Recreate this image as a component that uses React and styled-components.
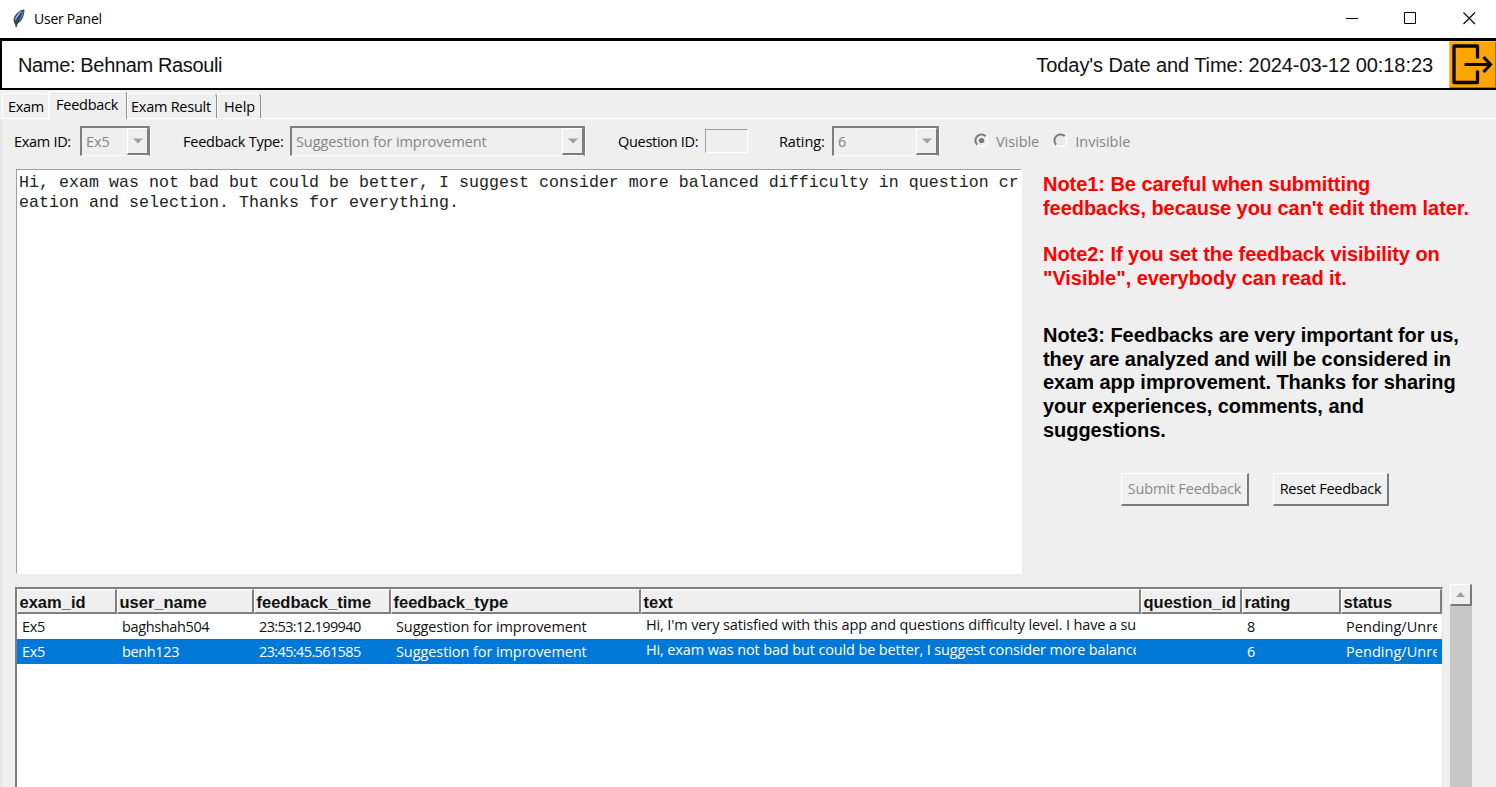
import React from "react";
import styled, { createGlobalStyle, css } from "styled-components";

const GlobalStyle = createGlobalStyle`
  * { box-sizing: border-box; }
  body { margin: 0; overflow: hidden; background: #f0f0f0; }
`;

const Window = styled.div`
  width: 1496px;
  height: 787px;
  overflow: hidden;
  display: flex;
  flex-direction: column;
  background: #efefef;
  font-family: "Open Sans", "Noto Sans", sans-serif;
  font-size: 14.5px;
  line-height: 20px;
  color: #000;
  white-space: nowrap;
`;

const TitleBar = styled.header`
  height: 38px;
  flex: none;
  display: flex;
  align-items: center;
  background: #fff;
  padding: 0 12px 1px;
`;
const Title = styled.h1`
  margin: 0 auto 0 9px;
  font-size: 14px;
  font-weight: 400;
  letter-spacing: -0.25px;
`;
const WindowButtons = styled.div`
  display: flex;
  gap: 46px;
  margin-right: 8px;
  svg { display: block; }
`;

const UserBar = styled.section`
  height: 52px;
  flex: none;
  display: flex;
  align-items: center;
  background: #fff;
  border: 2px solid #000;
  border-top-width: 3px;
  border-right-width: 0;
  font-family: "Liberation Sans", Arial, sans-serif;
  font-size: 20px;
  color: #111;
  padding-left: 16px;
`;
const UserName = styled.div`
  margin-right: auto;
  letter-spacing: -0.35px;
`;
const Clock = styled.div`
  margin-right: 16px;
  letter-spacing: -0.07px;
`;
const ExitButton = styled.button`
  width: 47px;
  height: 47px;
  padding: 0;
  border: 0;
  background: #ffa500;
  box-shadow: inset 1px 1px #ffc14d, inset -1px -1px #a86e00;
  svg { display: block; }
`;

const Tabs = styled.nav`
  height: 29px;
  flex: none;
  display: flex;
  align-items: flex-end;
  padding-left: 2px;
  border-bottom: 1px solid #fff;
`;
const Tab = styled.div`
  width: ${(p) => p.$w}px;
  height: 25px;
  padding: 3px 0 0 ${(p) => p.$pad}px;
  border: 1px solid #fff;
  border-right-color: ${(p) => (p.$covered ? "#efefef" : "#8f8f8f")};
  border-bottom: 0;
  border-radius: 3px 4px 0 0;
  background: #efefef;
  letter-spacing: ${(p) => p.$ls}px;
  ${(p) => p.$active && css`
    height: 28px;
    margin-bottom: -1px;
    border-left-width: 2px;
  `}
`;

const Pane = styled.main`
  flex: 1;
  display: flex;
  flex-direction: column;
  border-left: 2px solid #e6e6e6;
`;
const Controls = styled.div`
  height: 50px;
  flex: none;
  display: flex;
  align-items: flex-start;
  padding: 7px 0 0 12px;
`;
const Label = styled.label`
  width: ${(p) => p.$w}px;
  padding-top: 6px;
  letter-spacing: ${(p) => p.$ls}px;
`;
const Combo = styled.div`
  width: ${(p) => p.$w}px;
  height: 30px;
  margin-right: ${(p) => p.$gap}px;
  display: flex;
  justify-content: space-between;
  padding-left: 4px;
  color: #858585;
  letter-spacing: ${(p) => p.$ls}px;
  border: 2px solid #808080;
  border-bottom: 1px solid #fafafa;
  box-shadow: 1px 0 #fafafa;
  line-height: 28px;
`;
const ComboArrow = styled.div`
  width: 21px;
  height: 27px;
  display: grid;
  place-items: center;
  border: 1px solid #fff;
  border-right: 1px solid #7c7c7c;
  border-bottom: 2px solid #7c7c7c;
  svg { display: block; }
`;
const Entry = styled.div`
  width: 43px;
  height: 24px;
  margin: 3px 31px 0 0;
  border: 1px solid #a0a0a0;
  border-right-color: #fff;
  border-bottom-color: #fff;
`;
const Radio = styled.label`
  display: flex;
  gap: 7px;
  margin-right: 14px;
  padding-top: 6px;
  color: #858585;
  letter-spacing: ${(p) => p.$ls}px;
  svg { display: block; margin-top: 1px; }
`;

const Editor = styled.div`
  display: grid;
  grid-template-columns: 1006px 1fr;
  height: 415px;
  flex: none;
  padding-left: 14px;
`;
const TextArea = styled.div`
  height: 405px;
  background: #fff;
  border: 1px solid #a0a0a0;
  border-right-color: #fff;
  border-bottom-color: #fff;
  padding: 3px 0 0 2px;
  font-family: "Liberation Mono", "Courier New", monospace;
  font-size: 16.6px;
  letter-spacing: 0.04px;
  color: #222;
  white-space: pre;
`;
const Side = styled.aside`
  padding: 4px 0 0 21px;
`;
const Note = styled.p`
  margin: 0 0 ${(p) => p.$gap}px;
  font: 700 20px/23.9px "Liberation Sans", Arial, sans-serif;
  letter-spacing: -0.05px;
  color: ${(p) => (p.$warn ? "#ff0000" : "#000")};
`;
const Actions = styled.div`
  display: flex;
  gap: 24px;
  padding-left: 78px;
`;
const Button = styled.button`
  width: ${(p) => p.$w}px;
  height: 33px;
  padding: 0;
  font: inherit;
  letter-spacing: ${(p) => p.$ls}px;
  color: ${(p) => (p.disabled ? "#8a8a8a" : "#000")};
  background: #f0f0f0;
  border: 1px solid #fff;
  border-right: 2px solid #7a7a7a;
  border-bottom: 2px solid #7a7a7a;
`;

const TableArea = styled.div`
  flex: 1;
  display: flex;
  padding-left: 13px;
`;
const Table = styled.div`
  width: 1428px;
  margin: 3px 7px 0 0;
  background: #fff;
  border: 2px solid #808080;
  border-right: 1px solid #e3e3e3;
  border-bottom: 0;
`;
const Row = styled.div`
  display: grid;
  grid-template-columns: 100px 137px 137px 250px 500px 101px 99px 101px;
  height: 25px;
  color: ${(p) => (p.$selected ? "#fff" : "#111")};
  background: ${(p) => (p.$selected ? "#0078d7" : "#fff")};
`;
const Head = styled(Row)`
  background: #efefef;
  font: 700 16.5px/25px "Liberation Sans", Arial, sans-serif;
`;
const HeadCell = styled.div`
  height: 25px;
  padding-left: 1.5px;
  border: 1px solid #fff;
  border-right: 2px solid #808080;
  border-bottom: 2px solid #808080;
`;
const Cell = styled.div`
  overflow: hidden;
  height: 25px;
  margin: 0 5px 0 5px;
  line-height: ${(p) => (p.$raised ? 21 : 25)}px;
  letter-spacing: ${(p) => p.$ls || 0}px;
`;
const ScrollBar = styled.div`
  width: 22px;
  background: #c8c8c8;
`;
const ScrollArrow = styled.div`
  height: 22px;
  display: grid;
  place-items: center;
  background: #efefef;
  border: 1px solid #fff;
  border-right: 2px solid #7a7a7a;
  border-bottom: 2px solid #7a7a7a;
`;

const Feather = () => (
  <svg width="13" height="20" viewBox="0 0 13 20">
    <path d="M11.500.5C7 1.500 2 6 1.500 11.500l1.500 4 1.200 3.500.6-4C9.500 13 12 8 12.500 1z" fill="#3a3f47" />
    <path d="M9.500 2C6 4 3 8 2.800 12L9.500 3z" fill="#8db9e6" />
    <path d="M11.500 2C11.300 7 8.500 12 4.500 14L9.800 3z" fill="#4a86c8" />
    <path d="M9.500 4L4 18" stroke="#152133" strokeWidth=".8" />
  </svg>
);
const ExitIcon = () => (
  <svg width="47" height="47" viewBox="0 0 47 47" fill="none" stroke="#0a0700">
    <path d="M28.500 17.500V5H5v36.500h23.500V29.500" strokeWidth="3.300" strokeLinejoin="round" />
    <path d="M15.500 23.500H41.500M34.500 16l7 7.500-7 7.500" strokeWidth="3.200" />
  </svg>
);
const Down = () => (
  <svg width="10" height="6"><path d="M0 .5h10L5 5.500z" fill="#a0a0a0" /></svg>
);
const RadioMark = ({ on }) => (
  <svg width="15" height="15" viewBox="0 0 15 15" fill="none">
    <circle cx="7.500" cy="7.500" r="6" stroke="#fff" strokeWidth="1.500" fill="#e9e9e9" />
    <path d="M3.200 11.700A6 6 0 0 1 11.700 3.200" stroke="#7b7b7b" strokeWidth="2" />
    {on && <circle cx="7.500" cy="7.500" r="2.600" fill="#777" />}
  </svg>
);

const columns = ["exam_id", "user_name", "feedback_time", "feedback_type", "text", "question_id", "rating", "status"];
const rows = [
  ["Ex5", "baghshah504", "23:53:12.199940", "Suggestion for improvement", "Hi, I'm very satisfied with this app and questions difficulty level. I have a su", "", "8", "Pending/Unread"],
  ["Ex5", "benh123", "23:45:45.561585", "Suggestion for improvement", "Hi, exam was not bad but could be better, I suggest consider more balanced", "", "6", "Pending/Unread"],
];
const spacing = [-0.3, -0.37, -0.62, -0.08, -0.13, 0, 0, 0.04];

export default function App() {
  return (
    <Window>
      <GlobalStyle />
      <TitleBar>
        <Feather />
        <Title>User Panel</Title>
        <WindowButtons>
          <svg width="13" height="13"><path d="M1 6.500h12" stroke="#000" /></svg>
          <svg width="13" height="13"><path d="M.5.5h11v11H.5z" fill="none" stroke="#000" /></svg>
          <svg width="13" height="13"><path d="M.5.5l11.500 11.500m0-11.500l-11.500 11.500" stroke="#000" strokeWidth="1.100" /></svg>
        </WindowButtons>
      </TitleBar>
      <UserBar>
        <UserName>Name: Behnam Rasouli</UserName>
        <Clock>Today's Date and Time: 2024-03-12 00:18:23</Clock>
        <ExitButton aria-label="Exit"><ExitIcon /></ExitButton>
      </UserBar>
      <Tabs>
        <Tab $w={46} $pad={5} $ls={-0.3} $covered>Exam</Tab>
        <Tab $w={79} $pad={6} $ls={-0.25} $active>Feedback</Tab>
        <Tab $w={90} $pad={3} $ls={-0.25}>Exam Result</Tab>
        <Tab $w={44} $pad={6} $ls={-0.1}>Help</Tab>
      </Tabs>
      <Pane>
        <Controls>
          <Label $w={66} $ls={-0.3}>Exam ID:</Label>
          <Combo $w={70} $gap={33} $ls={-0.1}>Ex5<ComboArrow><Down /></ComboArrow></Combo>
          <Label $w={107} $ls={-0.25}>Feedback Type:</Label>
          <Combo $w={295} $gap={33} $ls={-0.08}>Suggestion for improvement<ComboArrow><Down /></ComboArrow></Combo>
          <Label $w={87} $ls={-0.3}>Question ID:</Label>
          <Entry />
          <Label $w={53} $ls={-0.1}>Rating:</Label>
          <Combo $w={107} $gap={35} $ls={0}>6<ComboArrow><Down /></ComboArrow></Combo>
          <Radio $ls={-0.05}><RadioMark on />Visible</Radio>
          <Radio $ls={0}><RadioMark />Invisible</Radio>
        </Controls>
        <Editor>
          <TextArea>{"Hi, exam was not bad but could be better, I suggest consider more balanced difficulty in question cr\neation and selection. Thanks for everything."}</TextArea>
          <Side>
            <Note $warn $gap={22}>Note1: Be careful when submitting<br />feedbacks, because you can't edit them later.</Note>
            <Note $warn $gap={33}>Note2: If you set the feedback visibility on<br />"Visible", everybody can read it.</Note>
            <Note $gap={30}>Note3: Feedbacks are very important for us,<br />they are analyzed and will be considered in<br />exam app improvement. Thanks for sharing<br />your experiences, comments, and<br />suggestions.</Note>
            <Actions>
              <Button $w={128} $ls={-0.15} disabled>Submit Feedback</Button>
              <Button $w={116} $ls={-0.25}>Reset Feedback</Button>
            </Actions>
          </Side>
        </Editor>
        <TableArea>
          <Table>
            <Head>{columns.map((c) => <HeadCell key={c}>{c}</HeadCell>)}</Head>
            {rows.map((r, i) => (
              <Row key={i} $selected={i === 1}>
                {r.map((v, j) => <Cell key={j} $raised={j === 4} $ls={spacing[j]}>{v}</Cell>)}
              </Row>
            ))}
          </Table>
          <ScrollBar>
            <ScrollArrow><svg width="9" height="5"><path d="M0 5h9L4.500 0z" fill="#a0a0a0" /></svg></ScrollArrow>
          </ScrollBar>
        </TableArea>
      </Pane>
    </Window>
  );
}
